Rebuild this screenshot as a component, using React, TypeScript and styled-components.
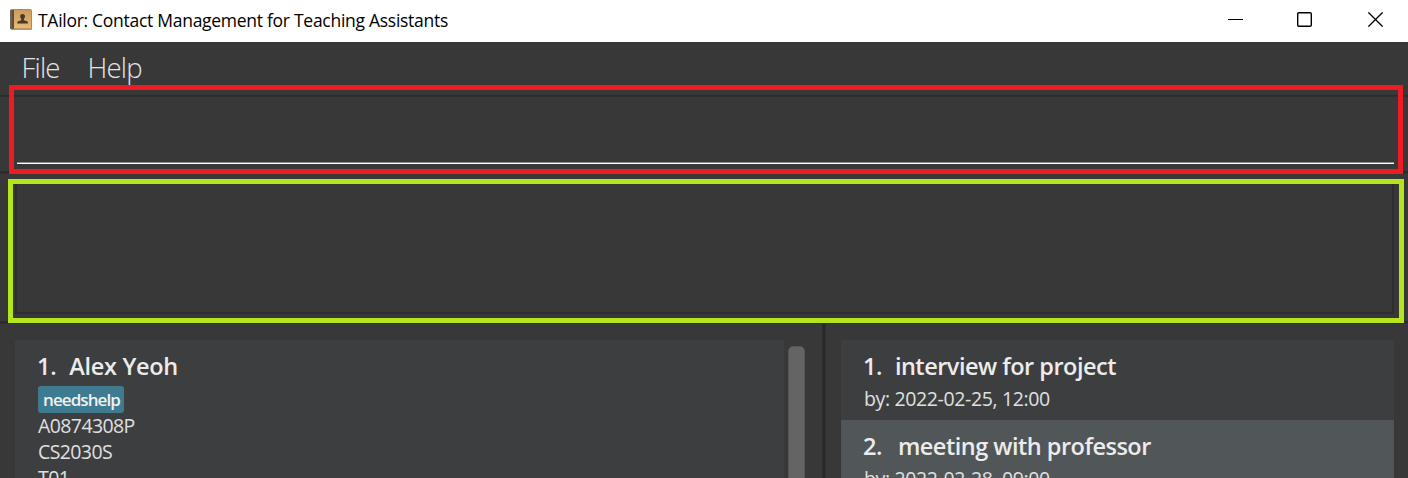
import React from "react";
import styled, { createGlobalStyle } from "styled-components";

const GlobalStyle = createGlobalStyle`
  * { box-sizing: border-box; }
  body { margin: 0; background: #383838; overflow: hidden; font-family: "Open Sans", "Noto Sans", sans-serif; }
`;

const Window = styled.div`
  position: relative;
  display: flex;
  flex-direction: column;
  width: 1408px;
  height: 478px;
  overflow: hidden;
  background: #383838;
`;

const TitleBar = styled.header`
  display: flex;
  flex: none;
  align-items: center;
  height: 42px;
  padding: 0 25px 3px 10px;
  background: #fff;
`;

const Title = styled.span`
  flex: 1;
  margin-left: 6px;
  padding-top: 1px;
  font-size: 17.5px;
  line-height: 24px;
  letter-spacing: -0.28px;
  color: #000;
`;

const WindowButtons = styled.div`
  display: flex;
  gap: 54px;
`;

const ButtonIcon = styled.svg`
  display: block;
  width: 15px;
  height: 15px;

  &:last-child { margin-left: 2px; }
`;

const MenuBar = styled.nav`
  display: flex;
  flex: none;
  gap: 28px;
  height: 53px;
  padding: 7px 22px 0;
`;

const MenuItem = styled.span<{ $width: number }>`
  width: ${(p) => p.$width}px;
  font-size: 27.5px;
  font-weight: 300;
  line-height: 38px;
  letter-spacing: -0.8px;
  text-indent: -0.5px;
  white-space: nowrap;
  color: #e4e4e4;
`;

const Divider = styled.div<{ $height: number }>`
  flex: none;
  height: ${(p) => p.$height}px;
  background: linear-gradient(#2b2b2b, #303030);
`;

const CommandPane = styled.div`
  flex: none;
  height: 74px;
  padding: 0 14px 7px 17px;
`;

const CommandField = styled.div`
  height: 67px;
  border-bottom: 1px solid #fff;
  box-shadow: inset 0 -1px #8c8c8c;
`;

const ResultPane = styled.div`
  flex: none;
  height: 147px;
  padding: 6px 14px 7px 15px;
`;

const ResultBox = styled.div`
  height: 134px;
  border: 2px solid #2e2e2e;
`;

const Lists = styled.main`
  display: flex;
  flex: 1;
  min-height: 0;
`;

const ListPane = styled.section<{ $width: number }>`
  display: flex;
  width: ${(p) => p.$width}px;
  padding: 16px 14px 0 15px;
`;

const Splitter = styled.div`
  width: 4px;
  background: linear-gradient(90deg, #303030, #292929, #292929, #343434);
`;

const List = styled.div`
  flex: 1;
  overflow: hidden;
`;

const Card = styled.article<{ $height: number; $alt?: boolean }>`
  height: ${(p) => p.$height}px;
  padding: 9px 23px 0;
  background: ${(p) => (p.$alt ? "#515658" : "#3c3e3f")};
`;

const Heading = styled.h2<{ $gap: number; $spacing: number }>`
  display: flex;
  gap: ${(p) => p.$gap}px;
  margin: 0 0 1px -1px;
  font-size: 23.5px;
  font-weight: 600;
  line-height: 34px;
  letter-spacing: ${(p) => p.$spacing}px;
  white-space: nowrap;
  color: #ececec;
`;

const Tag = styled.span`
  display: block;
  width: 86px;
  height: 27px;
  margin-top: 3px;
  padding-left: 5px;
  border-radius: 3px;
  background: #3e7b91;
  font-size: 17px;
  font-weight: 600;
  line-height: 27px;
  letter-spacing: -0.92px;
  color: #f0f0f0;
`;

const Detail = styled.div<{ $spacing: number; $height: number }>`
  font-size: 19.5px;
  line-height: ${(p) => p.$height}px;
  letter-spacing: ${(p) => p.$spacing}px;
  white-space: nowrap;
  color: #e0e0e0;
`;

const ScrollBar = styled.div`
  width: 17px;
  margin: 6px 3px -8px 4px;
  border: 1px solid #565656;
  border-radius: 5px;
  background: #646464;
`;

const Highlight = styled.div<{ $color: string; $left: number; $top: number; $width: number; $height: number }>`
  position: absolute;
  left: ${(p) => p.$left}px;
  top: ${(p) => p.$top}px;
  width: ${(p) => p.$width}px;
  height: ${(p) => p.$height}px;
  border: 5px solid ${(p) => p.$color};
`;

const BookIcon = () => (
  <svg width="22" height="21" viewBox="0 0 22 21">
    <defs>
      <linearGradient id="cover" x1="0" y1="0" x2="0" y2="1">
        <stop offset="0" stopColor="#c79b5a" />
        <stop offset="1" stopColor="#e9bc72" />
      </linearGradient>
    </defs>
    <rect x="0.5" y="0.5" width="21" height="19.500" rx="1" fill="url(#cover)" stroke="#b18a52" />
    <path d="M0 1h4v19H0z" fill="#5d4c43" />
    <path d="M1 1v19" stroke="#8a7669" />
    <path d="M1 20.200h21" stroke="#8d8580" />
    <path d="M12.600 5c1.700 0 2.500 1.100 2.400 2.600-.1 1.200-.6 1.900-1.100 2.300v1.400l3.100.9c.7.200 1 .8 1 2.400H7.200c0-1.600.3-2.200 1-2.400l3.100-.9V9.900c-.5-.4-1-1.100-1.100-2.300C10.100 6.100 10.900 5 12.600 5z" fill="#49382d" />
  </svg>
);

export default function App() {
  return (
    <>
      <GlobalStyle />
      <Window>
        <TitleBar>
          <BookIcon />
          <Title>TAilor: Contact Management for Teaching Assistants</Title>
          <WindowButtons>
            <ButtonIcon viewBox="0 0 15 15"><path d="M0 7.500h15" stroke="#000" /></ButtonIcon>
            <ButtonIcon viewBox="0 0 15 15"><rect x="0.700" y="0.700" width="13.600" height="13.600" rx="1.200" fill="none" stroke="#000" strokeWidth="1.400" /></ButtonIcon>
            <ButtonIcon viewBox="0 0 15 15"><path d="M.4.4l14.200 14.200M14.600.4L.4 14.600" stroke="#000" strokeWidth="1.300" /></ButtonIcon>
          </WindowButtons>
        </TitleBar>
        <MenuBar>
          <MenuItem $width={38}>File</MenuItem>
          <MenuItem $width={55}>Help</MenuItem>
        </MenuBar>
        <Divider $height={2} />
        <CommandPane><CommandField /></CommandPane>
        <Divider $height={3} />
        <ResultPane><ResultBox /></ResultPane>
        <Divider $height={3} />
        <Lists>
          <ListPane $width={822}>
            <List>
              <Card $height={160}>
                <Heading $gap={13} $spacing={-0.3}><span>1.</span><span>Alex Yeoh</span></Heading>
                <Tag>needshelp</Tag>
                <Detail $spacing={-0.6} $height={26}>A0874308P</Detail>
                <Detail $spacing={-0.6} $height={26}>CS2030S</Detail>
                <Detail $spacing={-0.6} $height={26}>T01</Detail>
              </Card>
            </List>
            <ScrollBar />
          </ListPane>
          <Splitter />
          <ListPane $width={582}>
            <List>
              <Card $height={80}>
                <Heading $gap={13} $spacing={-0.5}><span>1.</span><span>interview for project</span></Heading>
                <Detail $spacing={-0.36} $height={30}>by: 2022-02-25, 12:00</Detail>
              </Card>
              <Card $height={80} $alt>
                <Heading $gap={16} $spacing={-0.5}><span>2.</span><span>meeting with professor</span></Heading>
                <Detail $spacing={-0.36} $height={30}>by: 2022-02-28, 09:00</Detail>
              </Card>
            </List>
          </ListPane>
        </Lists>
        <Highlight $color="#ed1c24" $left={9} $top={85} $width={1394} $height={89} />
        <Highlight $color="#b5e61d" $left={8} $top={179} $width={1396} $height={144} />
      </Window>
    </>
  );
}
